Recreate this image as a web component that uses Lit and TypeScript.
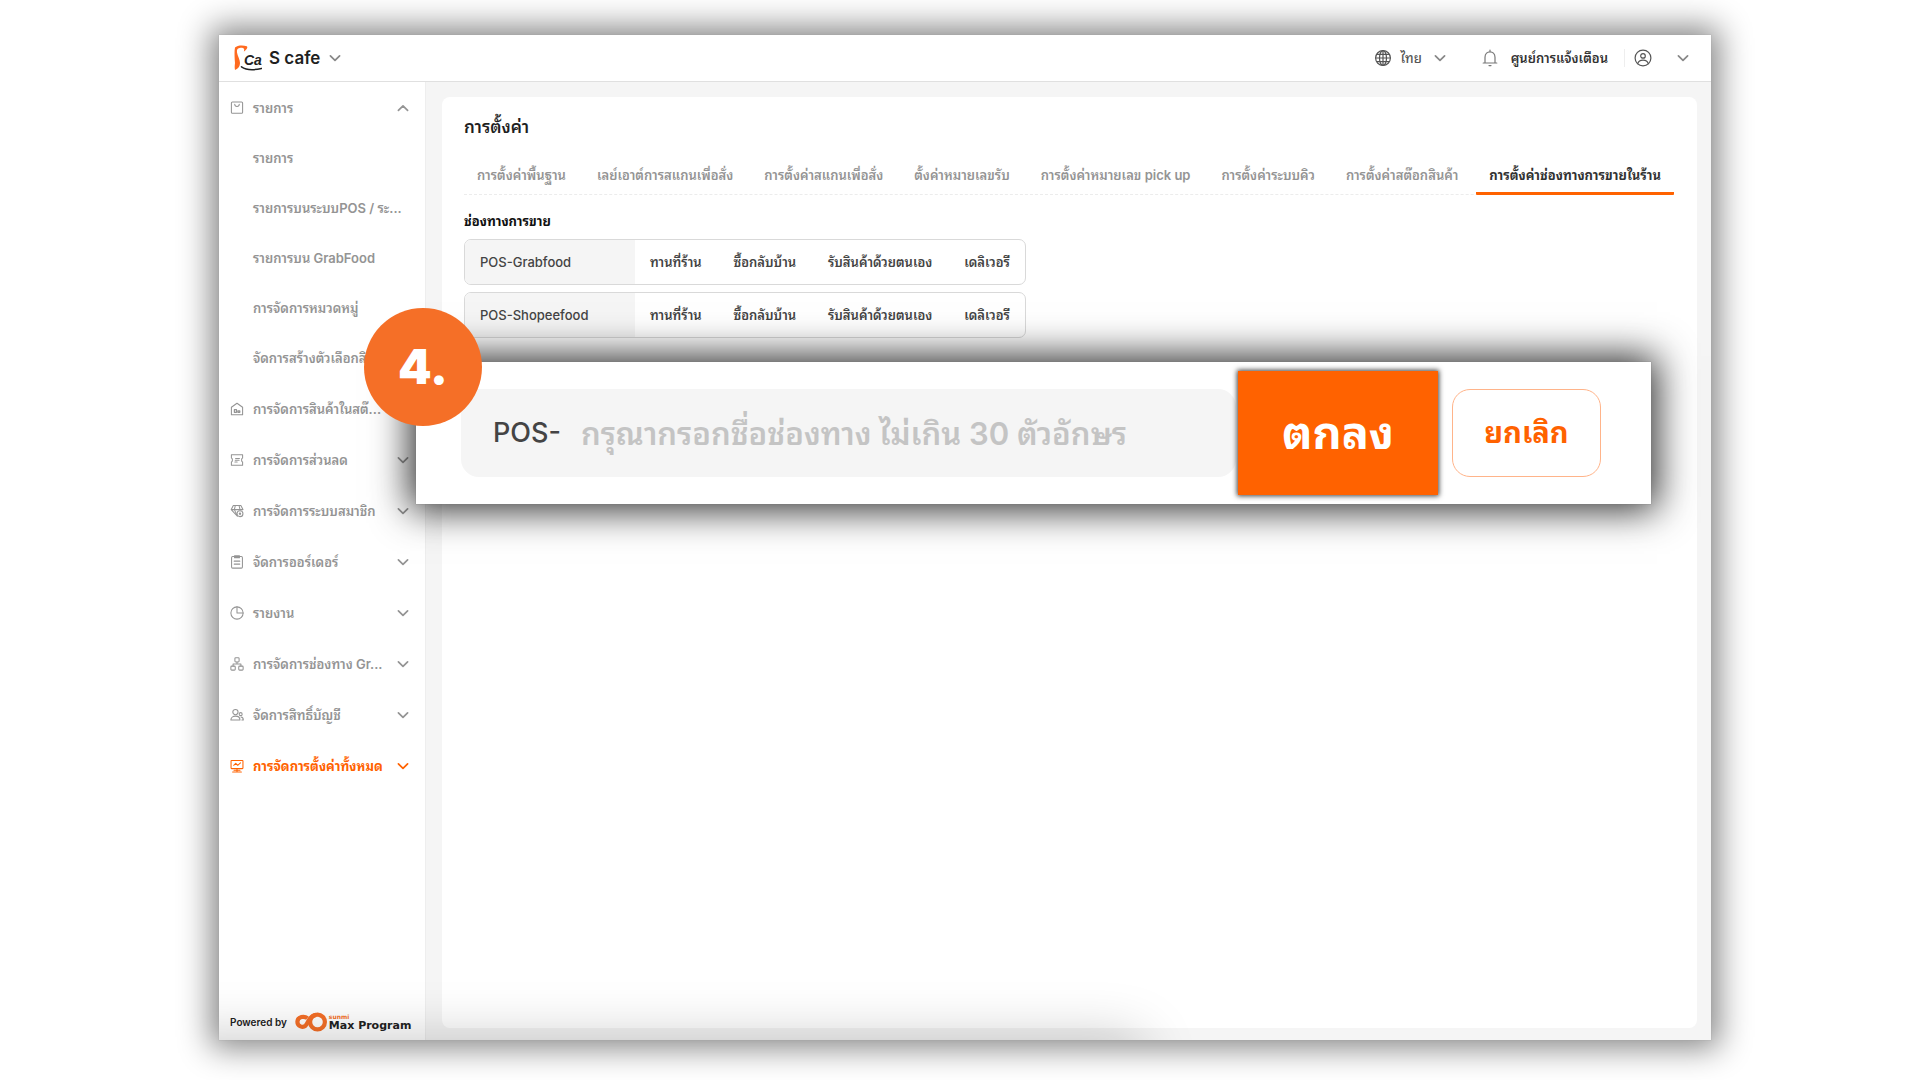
import { LitElement, html, css, svg } from "lit";
import type { TemplateResult } from "lit";
import { customElement, property } from "lit/decorators.js";
import { classMap } from "lit/directives/class-map.js";

/* Line icons, drawn on a 16 x 16 grid in the current text colour. */
const icons: Record<string, TemplateResult> = {
  list: svg`<rect x="1.6" y="1.2" width="12.8" height="12.8" rx="1.2"/><path d="M5.4 3.800c.2 3.400 5 3.400 5.200 0"/>`,
  stock: svg`<path d="M1.600 6 8 1.400 14.400 6v8.600H1.600z"/><path d="M5 8.800h2.400v3H5zM9 10.200h2.200v1.600H9z" stroke-width="1.4"/>`,
  discount: svg`<path d="M1.600 2h12.800v3.600c-1.600.4-1.600 4.400 0 4.800V14H1.600v-3.600c1.600-.4 1.600-4.400 0-4.800z"/><path d="M6.400 6.200h4.400M6 8.200h4.400M5.600 10.200h2.600"/>`,
  member: svg`<path d="M8.400 14 1.400 6.400l2.400-4.600h8.600l2.400 4.600M1.400 6.400h13.400M5 6.400l3 6.600M6 2 5 6.400M10.400 2l1 4.200"/><circle cx="11.400" cy="11" r="3.400"/><circle cx="11.400" cy="11" r=".8"/>`,
  order: svg`<rect x="1.800" y="1.800" width="12.400" height="13.200" rx="1.200"/><path d="M5.200.8h5.600v2.200H5.200zM4.800 7h6.400M4.800 10.400h6.400"/>`,
  report: svg`<circle cx="8" cy="8" r="7"/><path d="M8 1v7h7"/>`,
  channel: svg`<rect x="5.600" y=".8" width="4.800" height="4.800" rx="1"/><rect x="1" y="10.400" width="5" height="4.600" rx="1"/><rect x="10" y="10.400" width="5" height="4.600" rx="1"/><path d="M8 5.600V8M3.500 10.400V8h9v2.400"/>`,
  account: svg`<circle cx="6.200" cy="4.600" r="3"/><path d="M1 13.800c0-6 10.400-6 10.400 0z"/><circle cx="12.200" cy="7" r="1.700"/><path d="M12.600 10.400c1.600.2 2.600 1.400 2.600 3.400h-1.600"/>`,
  settings: svg`<rect x="1.200" y="1.600" width="13.600" height="9.400" rx=".6"/><path d="M4.200 7.200 6.600 5l2.200 2.200 3.200-2.800M8 11v3M3 14.800h10M4.600 12.900h6.800"/>`,
  globe: svg`<circle cx="8" cy="8" r="7.400"/><ellipse cx="8" cy="8" rx="3.500" ry="7.400"/><path d="M.8 8h14.400M2 4.400h12M2 11.600h12M8 .8v14.400"/>`,
  bell: svg`<path d="M8 0v1.600M3 12.800V7.200C3 0 13 0 13 7.200v5.600M1.200 13h13.600M7 15.600h2"/>`,
  user: svg`<circle cx="8" cy="8" r="7.900"/><circle cx="8" cy="5.900" r="2.300"/><path d="M2.700 13.600c1.400-4.600 9.200-4.600 10.600 0"/>`,
  down: svg`<path d="m3.400 5.800 4.600 4.600 4.600-4.600" stroke-width="1.700"/>`,
  up: svg`<path d="m3.400 10.400L8 5.800l4.600 4.600" stroke-width="1.700"/>`,
};

@customElement("line-icon")
export class LineIcon extends LitElement {
  @property() name = "";

  static styles = css`
    :host {
      display: block;
      flex: none;
      width: 16px;
      height: 16px;
    }
    svg {
      display: block;
      width: 100%;
      height: 100%;
      overflow: visible;
      fill: none;
      stroke: currentColor;
      stroke-width: 1.2;
      stroke-linejoin: round;
      stroke-linecap: round;
    }
  `;

  render() {
    return html`<svg viewBox="0 0 16 16" aria-hidden="true">${icons[this.name]}</svg>`;
  }
}

interface Group {
  icon: string;
  label: string;
  active?: boolean;
  children?: string[];
}

const menu: Group[] = [
  {
    icon: "list",
    label: "รายการ",
    children: [
      "รายการ",
      "รายการบนระบบPOS / ระ...",
      "รายการบน GrabFood",
      "การจัดการหมวดหมู่",
      "จัดการสร้างตัวเลือกสิ...",
    ],
  },
  { icon: "stock", label: "การจัดการสินค้าในสต๊..." },
  { icon: "discount", label: "การจัดการส่วนลด" },
  { icon: "member", label: "การจัดการระบบสมาชิก" },
  { icon: "order", label: "จัดการออร์เดอร์" },
  { icon: "report", label: "รายงาน" },
  { icon: "channel", label: "การจัดการช่องทาง Gr..." },
  { icon: "account", label: "จัดการสิทธิ์บัญชี" },
  { icon: "settings", label: "การจัดการตั้งค่าทั้งหมด", active: true },
];

const tabs = [
  "การตั้งค่าพื้นฐาน",
  "เลย์เอาต์การสแกนเพื่อสั่ง",
  "การตั้งค่าสแกนเพื่อสั่ง",
  "ตั้งค่าหมายเลขรับ",
  "การตั้งค่าหมายเลข pick up",
  "การตั้งค่าระบบคิว",
  "การตั้งค่าสต๊อกสินค้า",
  "การตั้งค่าช่องทางการขายในร้าน",
];

const channels = ["POS-Grabfood", "POS-Shopeefood"];
const services = ["ทานที่ร้าน", "ซื้อกลับบ้าน", "รับสินค้าด้วยตนเอง", "เดลิเวอรี"];

@customElement("app-root")
export class AppRoot extends LitElement {
  static styles = css`
    :host {
      display: block;
      --brand: #ff6200;
      --muted: #949494;
      --ink: #1f1f1f;
      --body: #444;
      font: 500 13px/24px Inter, "Noto Sans Thai Looped", sans-serif;
      color: var(--body);
    }
    * {
      box-sizing: border-box;
    }
    ul {
      list-style: none;
      margin: 0;
      padding: 0;
    }
    button,
    input {
      font: inherit;
      color: inherit;
      margin: 0;
      padding: 0;
      border: 0;
      background: none;
    }
    .stage {
      display: flex;
      min-height: 100vh;
      padding: 35px 209px 40px 219px;
      background: #fff;
      overflow: hidden;
    }
    .window {
      position: relative;
      flex: 1;
      display: flex;
      flex-direction: column;
      min-width: 0;
      background: #fff;
      box-shadow: 0 0 1px #999, 0 0 30px 8px rgba(0, 0, 0, 0.48);
    }
    .bar {
      display: flex;
      align-items: center;
      height: 47px;
      padding: 0 20px 0 15px;
      border-bottom: 1px solid #e0e0e0;
    }
    .shop {
      display: flex;
      align-items: center;
      gap: 7px;
      font-size: 17px;
      font-weight: 600;
      color: var(--ink);
    }
    .shop line-icon,
    .lang line-icon:last-child,
    .user line-icon:last-child {
      color: #888;
    }
    .logo {
      display: block;
      width: 28px;
      height: 26px;
    }
    .tools {
      display: flex;
      align-items: center;
      margin-left: auto;
    }
    .tools button {
      display: flex;
      align-items: center;
    }
    .lang {
      gap: 10px;
      margin-right: 34px;
      color: #555;
    }
    .notice {
      gap: 13px;
      padding-right: 16px;
      border-right: 1px solid #eee;
      color: #333;
      line-height: 18px;
      font-weight: 600;
    }
    .notice line-icon {
      color: #777;
    }
    .user {
      gap: 24px;
      padding-left: 10px;
      color: #555;
    }
    .main {
      flex: 1;
      display: flex;
    }
    .side {
      flex: none;
      display: flex;
      flex-direction: column;
      width: 207px;
      padding: 0 14px 6px 11px;
      border-right: 1px solid #eee;
      color: var(--muted);
      font-weight: 600;
    }
    .item {
      display: flex;
      align-items: center;
      gap: 9px;
      width: 100%;
      height: 51px;
      text-align: left;
      white-space: nowrap;
    }
    .item line-icon:first-child {
      width: 14px;
      height: 14px;
    }
    .item span {
      flex: 1;
      min-width: 0;
    }
    .item.active {
      color: var(--brand);
      font-weight: 700;
    }
    .sub {
      display: flex;
      align-items: center;
      height: 50px;
      padding-left: 23px;
      color: inherit;
      text-decoration: none;
      white-space: nowrap;
    }
    .powered {
      display: flex;
      align-items: center;
      gap: 8px;
      margin-top: auto;
      font-size: 10px;
      color: #222;
      white-space: nowrap;
    }
    .maker {
      display: flex;
      align-items: center;
      gap: 1px;
    }
    .maker svg {
      display: block;
      width: 33px;
      height: 20px;
    }
    .maker-name {
      display: flex;
      flex-direction: column;
      font: 700 11px/11px "DejaVu Sans", sans-serif;
    }
    .maker-name small {
      font-size: 6px;
      line-height: 6px;
      color: #f56f27;
    }
    .content {
      flex: 1;
      display: flex;
      min-width: 0;
      padding: 15px 14px 12px 16px;
      background: #f5f5f5;
    }
    .card {
      flex: 1;
      min-width: 0;
      padding: 18px 23px 18px 22px;
      border-radius: 8px;
      background: #fff;
    }
    h1 {
      margin: 0;
      font-size: 17px;
      line-height: 24px;
      font-weight: 600;
      color: var(--ink);
    }
    .tabs {
      display: flex;
      justify-content: space-between;
      height: 56px;
      border-bottom: 1px dashed #ececec;
    }
    .tab {
      display: flex;
      align-items: center;
      height: 56px;
      padding: 18px 13px 0;
      border-bottom: 3px solid transparent;
      color: var(--muted);
      font-weight: 600;
      white-space: nowrap;
    }
    .tab.active {
      border-bottom-color: var(--brand);
      border-radius: 1px;
      color: #333;
      font-weight: 700;
    }
    h2 {
      margin: 14px 0 6px;
      font-size: 13px;
      line-height: 24px;
      font-weight: 700;
      color: #111;
    }
    .channels {
      display: flex;
      flex-direction: column;
      gap: 7px;
      max-width: 562px;
    }
    .channel {
      display: flex;
      height: 46px;
      border: 1px solid #d9d9d9;
      border-radius: 7px;
      overflow: hidden;
    }
    .name {
      display: flex;
      align-items: center;
      width: 170px;
      padding-left: 15px;
      background: #f5f5f5;
    }
    .services {
      flex: 1;
      display: flex;
      align-items: center;
      justify-content: space-between;
      padding: 0 15px;
      white-space: nowrap;
      font-weight: 600;
    }
    .glow {
      position: absolute;
      inset: 0;
      overflow: hidden;
      pointer-events: none;
    }
    .glow::after {
      content: "";
      position: absolute;
      top: 100%;
      left: -50px;
      width: 970px;
      height: 80px;
      box-shadow: 0 0 56px 2px rgba(0, 0, 0, 0.22);
    }
    .popup {
      position: absolute;
      top: 327px;
      left: 197px;
      right: 60px;
      display: flex;
      align-items: center;
      height: 142px;
      padding: 0 50px 0 45px;
      background: #fff;
      box-shadow: 0 0 1px #777, 0 0 36px 6px rgba(0, 0, 0, 0.82);
    }
    .field {
      flex: 1;
      display: flex;
      align-items: center;
      gap: 20px;
      min-width: 0;
      height: 88px;
      padding: 0 32px;
      border-radius: 18px;
      background: #f5f5f5;
      font-size: 27px;
    }
    .field input {
      flex: 1;
      min-width: 0;
      height: 64px;
      font-size: 31px;
      font-weight: 600;
    }
    .field input::placeholder {
      color: #c4c4c4;
      opacity: 1;
    }
    .confirm {
      width: 200px;
      height: 124px;
      margin: 0 14px 0 2px;
      background: var(--brand);
      box-shadow: 0 0 5px 1px rgba(0, 0, 0, 0.75);
      color: #fff;
      font-size: 45px;
      line-height: 64px;
      font-weight: 700;
    }
    .cancel {
      width: 149px;
      height: 88px;
      border: 1px solid #ffb48a;
      border-radius: 18px;
      color: var(--brand);
      font-size: 29px;
      line-height: 48px;
      font-weight: 700;
    }
    .step {
      position: absolute;
      top: 273px;
      left: 145px;
      display: flex;
      align-items: center;
      justify-content: center;
      width: 118px;
      height: 118px;
      border-radius: 50%;
      background: #f56f27;
      color: #fff;
      font-size: 48px;
      font-weight: 900;
    }
  `;

  private group(g: Group) {
    return html`<li>
      <button
        class=${classMap({ item: true, active: !!g.active })}
        aria-expanded=${g.children ? "true" : "false"}
      >
        <line-icon name=${g.icon}></line-icon>
        <span>${g.label}</span>
        <line-icon name=${g.children ? "up" : "down"}></line-icon>
      </button>
      ${g.children
        ? html`<ul>
            ${g.children.map((c) => html`<li><a class="sub" href="#">${c}</a></li>`)}
          </ul>`
        : ""}
    </li>`;
  }

  render() {
    return html`<div class="stage">
      <div class="window">
        <header class="bar">
          <button class="shop">
            <svg class="logo" viewBox="0 0 28 26" aria-hidden="true">
              <path
                d="M1 2.600C3 .2 9 0 12.800 1.200 14.200 2.200 12.800 4.600 9.800 6.600 11 4 9.600 2.600 6.600 2.800 3.600 3 2.600 4.600 3 7.400 3.600 11 6 14.400 6 18 6 21 4.400 23.800 1 25 .4 22 .8 20 1 18 .6 14 .4 9 .6 5.600Z"
                fill="#ff6a1f"
              />
              <text
                x="10"
                y="20"
                font-family="Liberation Sans"
                font-size="14"
                font-style="italic"
                font-weight="700"
                fill="#222"
              >Ca</text>
              <path
                d="M7.500 21.800C12 25 20 25.200 27.500 23.400"
                fill="none"
                stroke="#222"
                stroke-width="1.500"
                stroke-linecap="round"
              />
            </svg>
            <span>S cafe</span>
            <line-icon name="down"></line-icon>
          </button>
          <div class="tools">
            <button class="lang">
              <line-icon name="globe"></line-icon>
              <span>ไทย</span>
              <line-icon name="down"></line-icon>
            </button>
            <button class="notice">
              <line-icon name="bell"></line-icon>
              <span>ศูนย์การแจ้งเตือน</span>
            </button>
            <button class="user" aria-label="บัญชี">
              <line-icon name="user"></line-icon>
              <line-icon name="down"></line-icon>
            </button>
          </div>
        </header>
        <div class="main">
          <nav class="side">
            <ul>
              ${menu.map((g) => this.group(g))}
            </ul>
            <div class="powered">
              <span>Powered by</span>
              <div class="maker">
                <svg viewBox="0 0 33 20" aria-hidden="true">
                  <g fill="none" stroke="#f56f27" stroke-width="4.200">
                    <circle cx="22.500" cy="10" r="7.400" />
                    <path d="M12.400 6.200C9.500 3.800 2.600 4.400 2.400 9.800 2.400 14.600 8 16 10.600 13.600 13.600 10.600 14 3.400 21 2.800" />
                  </g>
                </svg>
                <div class="maker-name"><small>sunmi</small>Max Program</div>
              </div>
            </div>
          </nav>
          <main class="content">
            <section class="card">
              <h1>การตั้งค่า</h1>
              <div class="tabs" role="tablist">
                ${tabs.map((t, i) => {
                  const active = i === tabs.length - 1;
                  return html`<button
                    class=${classMap({ tab: true, active })}
                    role="tab"
                    aria-selected=${active ? "true" : "false"}
                  >${t}</button>`;
                })}
              </div>
              <h2>ช่องทางการขาย</h2>
              <ul class="channels">
                ${channels.map(
                  (c) => html`<li class="channel">
                    <div class="name">${c}</div>
                    <div class="services">${services.map((s) => html`<span>${s}</span>`)}</div>
                  </li>`
                )}
              </ul>
            </section>
          </main>
        </div>
        <div class="glow"></div>
        <form class="popup" @submit=${(e: Event) => e.preventDefault()}>
          <div class="field">
            <label for="channel-name">POS-</label>
            <input
              id="channel-name"
              type="text"
              maxlength="30"
              placeholder="กรุณากรอกชื่อช่องทาง ไม่เกิน 30 ตัวอักษร"
            />
          </div>
          <button class="confirm" type="submit">ตกลง</button>
          <button class="cancel" type="button">ยกเลิก</button>
        </form>
        <div class="step">4.</div>
      </div>
    </div>`;
  }
}
